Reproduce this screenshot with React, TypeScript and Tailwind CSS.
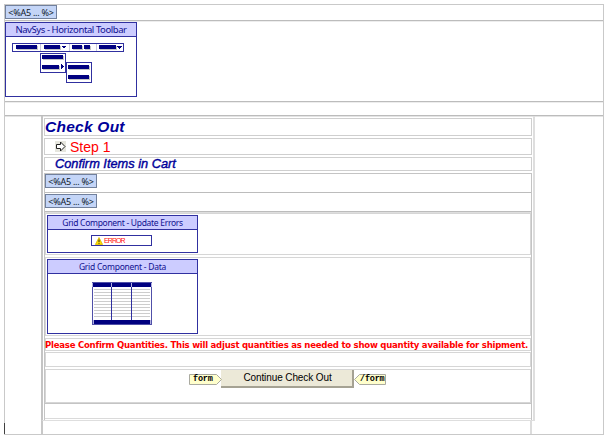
import React from 'react';

function ScriptTag() {
  return (
    <div className="flex h-[14px] w-[52px] shrink-0 items-center justify-center border border-[#71809c] bg-[#c4d5f7] font-['Noto_Sans',sans-serif] text-[9px] leading-none tracking-[-0.25px] whitespace-nowrap text-[#101828]">
      <span>&lt;%A5 ... %&gt;</span>
    </div>
  );
}

function Component({ title, className, titleClass, children }: { title: string; className: string; titleClass: string; children: React.ReactNode }) {
  return (
    <div className={'flex flex-col border border-[#3030a0] ' + className}>
      <div className={"flex h-[14px] shrink-0 items-center justify-center border-b border-[#3030a0] bg-[#ccccff] font-['Noto_Sans',sans-serif] leading-none whitespace-nowrap text-[#101090] " + titleClass}>
        <span>{title}</span>
      </div>
      {children}
    </div>
  );
}

function Bar({ x, y, w, h = 4 }: { x: number; y: number; w: number; h?: number }) {
  return (
    <g>
      <rect x={x + 1} y={y + 1} width={w} height={h} fill="#c4c4c4" />
      <rect x={x} y={y} width={w} height={h} fill="#000080" />
    </g>
  );
}

function ToolbarDrawing() {
  return (
    <svg width="130" height="59" viewBox="6 37 130 59" className="block" shapeRendering="crispEdges">
      <rect x="12.5" y="43.5" width="111" height="8" fill="#fff" stroke="#3030a0" />
      <path d="M40.5 44v7M69.5 44v7M96.5 44v7" stroke="#c8c8dc" />
      <Bar x={16} y={45} w={21} />
      <Bar x={44} y={45} w={16} />
      <Bar x={72} y={45} w={10} />
      <Bar x={84} y={45} w={6} />
      <Bar x={99} y={45} w={17} />
      <path d="M62 46h4l-2 3zM117 46h5l-2.500 3z" fill="#000080" />
      <rect x="40.5" y="53.5" width="25" height="19" fill="#fff" stroke="#3030a0" />
      <Bar x={42} y={55} w={21} />
      <Bar x={42} y={65} w={17} />
      <path d="M61 64v5l3-2.500z" fill="#000080" />
      <rect x="66.500" y="62.500" width="25" height="20" fill="#fff" stroke="#3030a0" />
      <Bar x={68} y={65} w={21} />
      <Bar x={68} y={75} w={21} />
    </svg>
  );
}

function GridDrawing() {
  return (
    <svg width="60" height="43" viewBox="0 0 60 43" shapeRendering="crispEdges">
      <rect x="0.5" y="0.500" width="59" height="42" fill="#fff" stroke="#5050a8" />
      {[7, 10, 13, 16, 19, 22, 25, 28, 31, 34].map((y) => (
        <path key={y} d={`M2 ${y}.5H58`} stroke="#cdcdcd" />
      ))}
      <rect x="1" y="1" width="58" height="4" fill="#000080" />
      <rect x="1" y="38" width="58" height="4" fill="#000080" />
      <path d="M19.500 5v33M39.500 5v33" stroke="#3030a0" />
      <path d="M0.500 1v4M19.500 1v4M39.500 1v4M59.500 1v4M1.500 38v4M58.500 38v4" stroke="#b0b0e0" />
    </svg>
  );
}

function FormTag({ close }: { close?: boolean }) {
  return (
    <div className="relative mt-[4px] h-[12px] w-[33px] shrink-0">
      <svg width="33" height="12" className="absolute inset-0">
        <path
          d={close ? 'M0.5 5.500L5.500 0.500H31.500V10.500H5.500Z' : 'M0.500 0.500H27.500L32.500 5.500L27.500 10.500H0.500Z'}
          fill="#ffffcc"
          stroke="#aaaaa0"
        />
      </svg>
      <span
        className={
          "absolute top-[1px] font-['Liberation_Mono','Courier_New',monospace] text-[8.5px] leading-[9px] font-bold tracking-[-0.2px] text-black " +
          (close ? 'left-[6px]' : 'left-[4px]')
        }
      >
        {close ? '/form' : 'form'}
      </span>
    </div>
  );
}

export default function App() {
  return (
    <div className="h-[439px] w-[608px] bg-white pt-1 pl-1 font-['Liberation_Sans',Arial,sans-serif]">
      <div className="flex h-[431px] w-[600px] flex-col border border-[#c9c9c9]">
        <div className="h-[16px] shrink-0 border-b border-[#bcbcbc] shadow-[0_1px_0_#ededed]">
          <ScriptTag />
        </div>
        <div className="h-[81px] shrink-0 border-b border-[#bcbcbc] pt-px shadow-[0_1px_0_#ededed]">
          <Component title="NavSys - Horizontal Toolbar" className="h-[75px] w-[132px]" titleClass="text-[9.5px] tracking-[-0.42px]">
            <ToolbarDrawing />
          </Component>
        </div>
        <div className="h-[14px] shrink-0 border-b border-[#bcbcbc] shadow-[0_1px_0_#e4e4e4]" />
        <div className="flex h-[318px]">
          <div className="flex w-[36px] items-end">
            <div className="-ml-px h-[11px] w-px bg-[#404040]" />
          </div>
          <div className="flex w-[494px] flex-col">
            <div className="flex h-[305px] flex-col border-r-2 border-b border-l-2 border-[#dedede] border-l-[#c4c4c4] pt-[2px] pl-px">
              <div className="flex h-[18px] w-[488px] shrink-0 items-center border border-[#cfcfcf] text-[15.5px] leading-none font-bold tracking-[0.25px] whitespace-nowrap text-[#000099] italic">
                <span>Check Out</span>
              </div>
              <div className="mt-[2px] flex h-[17px] w-[488px] shrink-0 items-center border border-[#cfcfcf] pl-[10px]">
                <svg width="11" height="11" viewBox="0 0 11 11" className="shrink-0">
                  <rect width="11" height="11" fill="#e6e6de" />
                  <path d="M1.500 3.500H5.500V1L10 5.500L5.500 10V7.500H1.500Z" fill="#fff" stroke="#222" />
                </svg>
                <span className="ml-1 text-[14px] leading-none whitespace-nowrap text-[#ff0000]">Step 1</span>
              </div>
              <div className="mt-[2px] flex h-[14px] w-[488px] shrink-0 items-center border border-[#cfcfcf] pl-[10px] text-[12.8px] leading-none whitespace-nowrap text-[#000099] italic [-webkit-text-stroke:0.4px_#000099]">
                <span>Confirm Items in Cart</span>
              </div>
              <div className="mt-[2px] h-[247px] w-[488px] shrink-0 border-x border-t border-[#c4c4c4]">
                <div className="h-[19px] border-b border-[#bcbcbc]">
                  <ScriptTag />
                </div>
                <div className="h-[19px] border-b border-[#bcbcbc] pt-px shadow-[0_1px_0_#dedede]">
                  <ScriptTag />
                </div>
                <div className="flex h-[192px] flex-col border-b border-[#c4c4c4] pt-px">
                  <div className="h-[42px] shrink-0 border border-[#d6d6d6] pt-px pl-px">
                    <Component title="Grid Component - Update Errors" className="h-[38px] w-[151px]" titleClass="pt-px text-[8.5px] tracking-[-0.3px]">
                      <div className="mt-[5px] ml-[43px] flex h-[11px] w-[61px] shrink-0 items-center border border-[#3030a0] pl-[3px]">
                        <svg width="8" height="8" viewBox="0 0 8 8">
                          <path d="M4 0.500L7.600 7.500H0.400Z" fill="#ffdc00" stroke="#d8b800" strokeWidth="0.800" />
                          <path d="M4 2.500V5M4 5.800V6.800" stroke="#222" />
                        </svg>
                        <span className="ml-px text-[7px] leading-none tracking-[-0.9px] text-[#ff1010]">ERROR</span>
                      </div>
                    </Component>
                  </div>
                  <div className="mt-[2px] h-[79px] shrink-0 border border-[#d6d6d6] pt-px pl-px">
                    <Component title="Grid Component - Data" className="h-[75px] w-[151px]" titleClass="pt-px text-[8.5px] tracking-[-0.25px]">
                      <div className="pt-[8px] pl-[44px]">
                        <GridDrawing />
                      </div>
                    </Component>
                  </div>
                  <div className="mt-[2px] flex h-[13px] shrink-0 items-center border border-[#d6d6d6] font-['DejaVu_Sans_Condensed','DejaVu_Sans',sans-serif] text-[9.5px] leading-none font-bold tracking-[-0.24px] whitespace-nowrap text-[#ff0000]">
                    <span className="-ml-px">Please Confirm Quantities. This will adjust quantities as needed to show quantity available for shipment.</span>
                  </div>
                  <div className="mt-px h-[15px] shrink-0 border border-[#d6d6d6]" />
                  <div className="mt-[2px] flex h-[34px] shrink-0 justify-center border border-[#d6d6d6]">
                    <FormTag />
                    <button className="-ml-px h-[18px] w-[133px] border-r-2 border-b-2 border-[#a5a293] bg-[#ece9d8] pl-[2px] text-[10px] leading-none tracking-[-0.1px]">
                      Continue Check Out
                    </button>
                    <FormTag close />
                  </div>
                </div>
                <div className="h-[15px] border-b border-[#dadada]" />
              </div>
            </div>
            <div className="h-[13px] w-[491px] border-r-2 border-l-2 border-[#dcdcdc] border-l-[#c8c8c8]" />
          </div>
        </div>
      </div>
    </div>
  );
}
